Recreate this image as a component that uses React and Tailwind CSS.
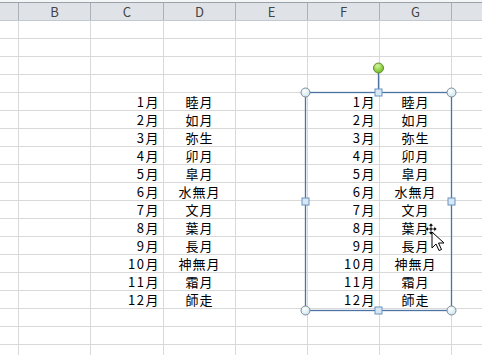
const months = [
  ["1月", "睦月"],
  ["2月", "如月"],
  ["3月", "弥生"],
  ["4月", "卯月"],
  ["5月", "皐月"],
  ["6月", "水無月"],
  ["7月", "文月"],
  ["8月", "葉月"],
  ["9月", "長月"],
  ["10月", "神無月"],
  ["11月", "霜月"],
  ["12月", "師走"],
];

const rows = [
  ...Array.from({ length: 4 }, () => null),
  ...months,
  ...Array.from({ length: 3 }, () => null),
];

function Cell({ className = "", children }) {
  return (
    <div
      className={`flex h-full shrink-0 items-center border-r border-[#d9d9d9] ${className}`}
    >
      {children}
    </div>
  );
}

function HeadCell({ className = "", children }) {
  return (
    <div
      className={`flex h-full shrink-0 items-center justify-center border-r border-[#a9b0b8] ${className}`}
    >
      {children}
    </div>
  );
}

function Row({ data }) {
  const [num, name] = data || ["", ""];
  return (
    <div className="flex h-[18px] shrink-0 border-b border-[#d9d9d9] text-[13px] leading-none text-black">
      <Cell className="w-[19px]" />
      <Cell className="w-[72px]" />
      <Cell className="w-[73px] justify-end pr-[3px] tracking-[1.5px]">{num}</Cell>
      <Cell className="w-[72px] justify-center tracking-[1px]">{name}</Cell>
      <Cell className="w-[72px]" />
      <Cell className="w-[72px] justify-end pr-[3px] tracking-[1.5px]">{num}</Cell>
      <Cell className="w-[72px] justify-center tracking-[1px]">{name}</Cell>
      <Cell className="flex-1 border-r-0" />
    </div>
  );
}

function Selection() {
  const corners = [
    [305, 92],
    [451, 92],
    [305, 310],
    [451, 310],
  ];
  const sides = [
    [378, 92],
    [305, 201],
    [451, 201],
    [378, 310],
  ];
  return (
    <svg
      className="pointer-events-none absolute left-0 top-0"
      width="482"
      height="355"
      viewBox="0 0 482 355"
    >
      <defs>
        <radialGradient id="hc" cx="40%" cy="35%" r="70%">
          <stop offset="0%" stopColor="#ffffff" />
          <stop offset="100%" stopColor="#c9e4ee" />
        </radialGradient>
        <radialGradient id="hg" cx="40%" cy="30%" r="70%">
          <stop offset="0%" stopColor="#d8f59a" />
          <stop offset="100%" stopColor="#6cbf1e" />
        </radialGradient>
      </defs>
      <rect x="305.5" y="92.5" width="146" height="218" fill="none" stroke="#4a72a3" strokeWidth="1.3" />
      <line x1="378.5" y1="73" x2="378.5" y2="92" stroke="#4a72a3" strokeWidth="1.3" />
      <circle cx="378.5" cy="68" r="5" fill="url(#hg)" stroke="#5f8a3a" strokeWidth="1" />
      {corners.map(([x, y]) => (
        <circle key={`${x}-${y}`} cx={x + 0.5} cy={y + 0.5} r="4.5" fill="url(#hc)" stroke="#7d8b97" strokeWidth="1" />
      ))}
      {sides.map(([x, y]) => (
        <rect key={`${x}-${y}`} x={x - 3} y={y - 3} width="7" height="7" fill="#d6e8f6" stroke="#6a93bf" strokeWidth="1" />
      ))}
      <g transform="translate(431 229)">
        <path
          d="M0 -6 L-2.5 -3 L-0.8 -3 L-0.8 -0.8 L-3 -0.8 L-3 -2.5 L-6 0 L-3 2.5 L-3 0.8 L-0.8 0.8 L-0.8 3 L-2.5 3 L0 6 L2.5 3 L0.8 3 L0.8 0.8 L3 0.8 L3 2.5 L6 0 L3 -2.5 L3 -0.8 L0.8 -0.8 L0.8 -3 L2.5 -3 Z"
          fill="#000"
          stroke="#fff"
          strokeWidth="0.6"
        />
      </g>
      <path
        d="M432 232 L432 248 L436 244 L439 250.5 L441.5 249.5 L438.5 243 L444 243 Z"
        fill="#fff"
        stroke="#000"
        strokeWidth="1"
        strokeLinejoin="miter"
      />
    </svg>
  );
}

export default function App() {
  return (
    <div
      className="relative flex h-[355px] w-[482px] flex-col overflow-hidden bg-white"
      style={{ fontFamily: '"Noto Sans CJK JP", "Liberation Sans", sans-serif' }}
    >
      <div className="h-[2px] shrink-0 bg-[#f4f5f7]" />
      <div className="flex h-[19px] shrink-0 border-t border-b border-t-[#9aa1a9] border-b-[#c2c8cf] bg-[#dfe3e8] text-[13px] leading-none text-[#444]">
        <HeadCell className="w-[19px]" />
        <HeadCell className="w-[72px]">B</HeadCell>
        <HeadCell className="w-[73px]">C</HeadCell>
        <HeadCell className="w-[72px]">D</HeadCell>
        <HeadCell className="w-[72px]">E</HeadCell>
        <HeadCell className="w-[72px]">F</HeadCell>
        <HeadCell className="w-[72px]">G</HeadCell>
        <HeadCell className="flex-1 border-r-0" />
      </div>
      {rows.map((r, i) => (
        <Row key={i} data={r} />
      ))}
      <Selection />
    </div>
  );
}
